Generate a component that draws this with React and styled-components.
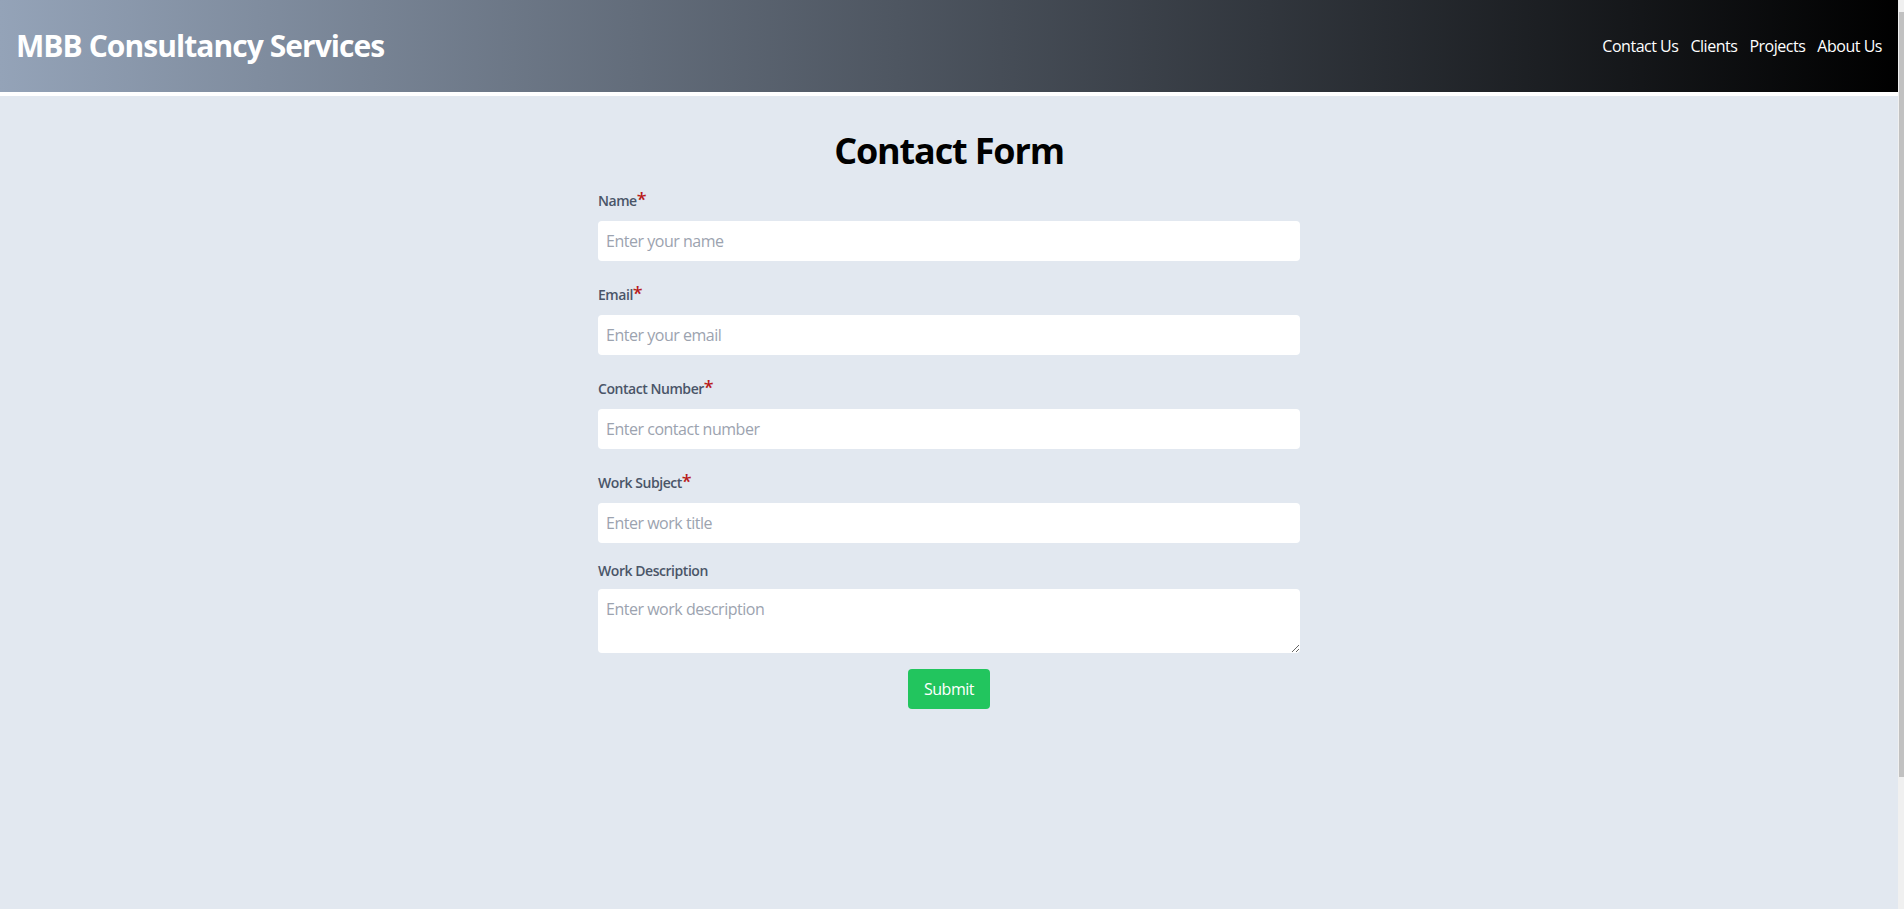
import React, { useState } from 'react';
import styled, { createGlobalStyle } from 'styled-components';

const GlobalStyle = createGlobalStyle`
  html, body {
    margin: 0;
    padding: 0;
  }

  body {
    padding-right: 6px;
    background: #e2e8f0;
    font-family: 'Open Sans', 'Noto Sans', sans-serif;
    letter-spacing: -0.48px;
  }

  *, *::before, *::after {
    box-sizing: border-box;
  }
`;

// thin page scrollbar, drawn over the right edge
const ScrollRail = styled.div`
  position: fixed;
  top: 0;
  right: 0;
  width: 6px;
  height: 100vh;
  background: #f0f0f0;
`;

const ScrollThumb = styled.div`
  position: absolute;
  top: 12px;
  left: 1px;
  right: 0;
  height: 765px;
  background: #c1c1c1;
`;

const Header = styled.header`
  display: flex;
  align-items: center;
  justify-content: space-between;
  padding: 28px 16px;
  background: linear-gradient(to right, #94a3b8, #000000);
  border-bottom: 4px solid #ffffff;
`;

const Brand = styled.h1`
  margin: 0;
  font-size: 30px;
  line-height: 36px;
  font-weight: 700;
  letter-spacing: -0.94px;
  color: #ffffff;
`;

const Nav = styled.nav`
  display: flex;
  align-items: center;
  gap: 12px;
`;

const NavLink = styled.a`
  color: #ffffff;
  font-size: 16px;
  line-height: 24px;
  text-decoration: none;
  cursor: pointer;

  &:hover {
    text-decoration: underline;
  }
`;

const Main = styled.main`
  min-height: calc(100vh - 96px);
  display: flex;
  flex-direction: column;
  align-items: center;
  padding-top: 35px;
`;

const Title = styled.h2`
  margin: 0 0 12px;
  font-size: 36px;
  line-height: 40px;
  font-weight: 700;
  letter-spacing: -1.15px;
  color: #000000;
`;

const Form = styled.form`
  width: 702px;
  display: flex;
  flex-direction: column;
`;

const Field = styled.div`
  margin-bottom: 16px;
`;

const Label = styled.label`
  display: block;
  padding-top: 2px;
  margin-bottom: 8px;
  font-size: 14px;
  line-height: 20px;
  font-weight: 600;
  letter-spacing: -0.45px;
  color: #4a5568;
`;

const Required = styled.span`
  color: #b91c1c;
  font-size: 18px;
  line-height: 28px;
`;

const Input = styled.input`
  display: block;
  width: 100%;
  height: 40px;
  padding: 0 8px;
  border: none;
  border-radius: 4px;
  background: #ffffff;
  font-family: inherit;
  letter-spacing: inherit;
  font-size: 16px;
  color: #1a202c;
  outline: none;

  &::placeholder {
    color: #9ca3af;
  }
`;

const TextArea = styled.textarea`
  display: block;
  width: 100%;
  height: 64px;
  padding: 8px;
  border: none;
  border-radius: 4px;
  background: #ffffff;
  font-family: inherit;
  letter-spacing: inherit;
  font-size: 16px;
  line-height: 24px;
  color: #1a202c;
  resize: vertical;
  outline: none;

  &::placeholder {
    color: #9ca3af;
  }
`;

const SubmitButton = styled.button`
  align-self: center;
  height: 40px;
  padding: 0 16px;
  border: none;
  border-radius: 4px;
  background: #22c55e;
  color: #ffffff;
  font-family: inherit;
  letter-spacing: inherit;
  font-size: 16px;
  cursor: pointer;

  &:hover {
    background: #16a34a;
  }
`;

const fields = [
  { name: 'name', label: 'Name', placeholder: 'Enter your name', type: 'text', required: true },
  { name: 'email', label: 'Email', placeholder: 'Enter your email', type: 'email', required: true },
  { name: 'contact', label: 'Contact Number', placeholder: 'Enter contact number', type: 'tel', required: true },
  { name: 'subject', label: 'Work Subject', placeholder: 'Enter work title', type: 'text', required: true },
];

const App = () => {
  const [values, setValues] = useState({});

  const handleChange = (e) => {
    setValues({ ...values, [e.target.name]: e.target.value });
  };

  const handleSubmit = (e) => {
    e.preventDefault();
  };

  return (
    <>
      <GlobalStyle />
      <Header>
        <Brand>MBB Consultancy Services</Brand>
        <Nav>
          {['Contact Us', 'Clients', 'Projects', 'About Us'].map((item) => (
            <NavLink key={item}>{item}</NavLink>
          ))}
        </Nav>
      </Header>
      <Main>
        <Title>Contact Form</Title>
        <Form onSubmit={handleSubmit}>
          {fields.map((f) => (
            <Field key={f.name}>
              <Label htmlFor={f.name}>
                {f.label}
                {f.required && <Required>*</Required>}
              </Label>
              <Input
                id={f.name}
                name={f.name}
                type={f.type}
                placeholder={f.placeholder}
                value={values[f.name] || ''}
                onChange={handleChange}
              />
            </Field>
          ))}
          <Field>
            <Label htmlFor="description">Work Description</Label>
            <TextArea
              id="description"
              name="description"
              placeholder="Enter work description"
              value={values.description || ''}
              onChange={handleChange}
            />
          </Field>
          <SubmitButton type="submit">Submit</SubmitButton>
        </Form>
      </Main>
      <ScrollRail>
        <ScrollThumb />
      </ScrollRail>
    </>
  );
};

export default App;
